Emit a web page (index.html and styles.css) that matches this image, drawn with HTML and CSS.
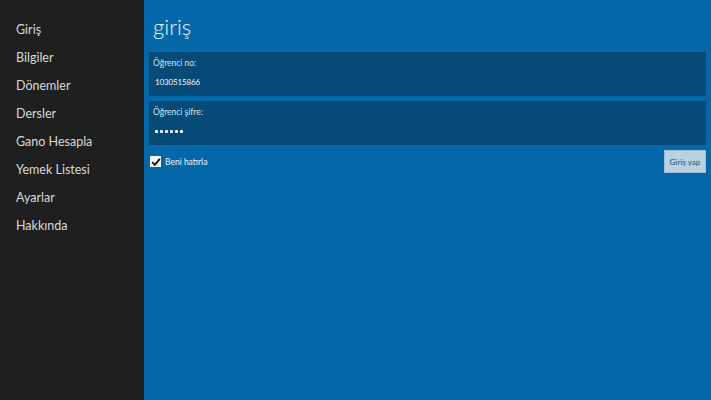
FILE: index.html
```html
<!DOCTYPE html>
<html lang="tr">
<head>
<meta charset="utf-8">
<link rel="stylesheet" href="styles.css">
</head>
<body>
<div class="app">
  <nav class="side">
    <div class="item">Giriş</div>
    <div class="item">Bilgiler</div>
    <div class="item">Dönemler</div>
    <div class="item">Dersler</div>
    <div class="item">Gano Hesapla</div>
    <div class="item">Yemek Listesi</div>
    <div class="item">Ayarlar</div>
    <div class="item last">Hakkında</div>
  </nav>
  <main class="main">
    <h1 class="title">giriş</h1>
    <div class="field">
      <div class="label">Öğrenci no:</div>
      <div class="value">1030515866</div>
    </div>
    <div class="field">
      <div class="label">Öğrenci şifre:</div>
      <div class="value dots" aria-label="••••••"><i></i><i></i><i></i><i></i><i></i><i></i></div>
    </div>
    <div class="row">
      <label class="check">
        <span class="box"><svg width="10" height="10" viewBox="0 0 10 10"><path d="M1.2 5.2 L3.8 7.8 L8.8 1.8" fill="none" stroke="#111" stroke-width="1.8"/></svg></span>
        <span>Beni hatırla</span>
      </label>
      <button class="btn">Giriş yap</button>
    </div>
  </main>
</div>
</body>
</html>
```
FILE: styles.css
```css
* { box-sizing: border-box; }
html, body { margin: 0; padding: 0; }
body {
  width: 711px;
  height: 400px;
  overflow: hidden;
  font-family: "Lato", "Open Sans", sans-serif;
}
.app {
  display: flex;
  height: 400px;
}
.side {
  width: 144px;
  background: #1f1f1f;
  padding-top: 15px;
  flex-shrink: 0;
}
.item {
  height: 28px;
  line-height: 29px;
  padding-left: 16px;
  font-size: 12.5px;
  color: #dadada;
  border-bottom: 1px solid #1a1a1a;
}
.item.last { border-bottom: none; }
.main {
  flex: 1;
  background: #0467a8;
  padding: 8px 5px 0 5px;
}
.title {
  margin: 0 0 6px 4px;
  font-weight: 300;
  font-size: 22px;
  line-height: 38px;
  color: #eef4fa;
}
.field {
  background: #064a77;
  height: 44px;
  margin-bottom: 5px;
  padding: 5px 0 0 4px;
  color: #fff;
}
.label {
  font-size: 8.5px;
  line-height: 12px;
  color: #d6e2ec;
}
.value {
  margin-top: 6px;
  padding-left: 2px;
  font-size: 8px;
  line-height: 14px;
  letter-spacing: -0.15px;
  color: #f4f8fb;
}
.value.dots {
  display: flex;
  align-items: center;
  gap: 2px;
  height: 14px;
}
.value.dots i {
  width: 3px;
  height: 3px;
  background: #f4f8fb;
  border-radius: 1px;
}
.row {
  display: flex;
  justify-content: space-between;
  align-items: flex-start;
  margin-top: 4px;
}
.check {
  display: flex;
  align-items: center;
  gap: 4px;
  margin-top: 6px;
  margin-left: 1px;
  font-size: 8.5px;
  color: #f1f6fa;
}
.box {
  width: 11px;
  height: 11px;
  background: #f4f4f4;
  display: flex;
  align-items: center;
  justify-content: center;
}
.btn {
  width: 42px;
  height: 23px;
  border: 1px solid #9fbcd4;
  background: #b8d2e5;
  color: #4f6b88;
  font-family: "Lato", "Open Sans", sans-serif;
  font-size: 8px;
  font-weight: 700;
  padding: 0;
}
```
